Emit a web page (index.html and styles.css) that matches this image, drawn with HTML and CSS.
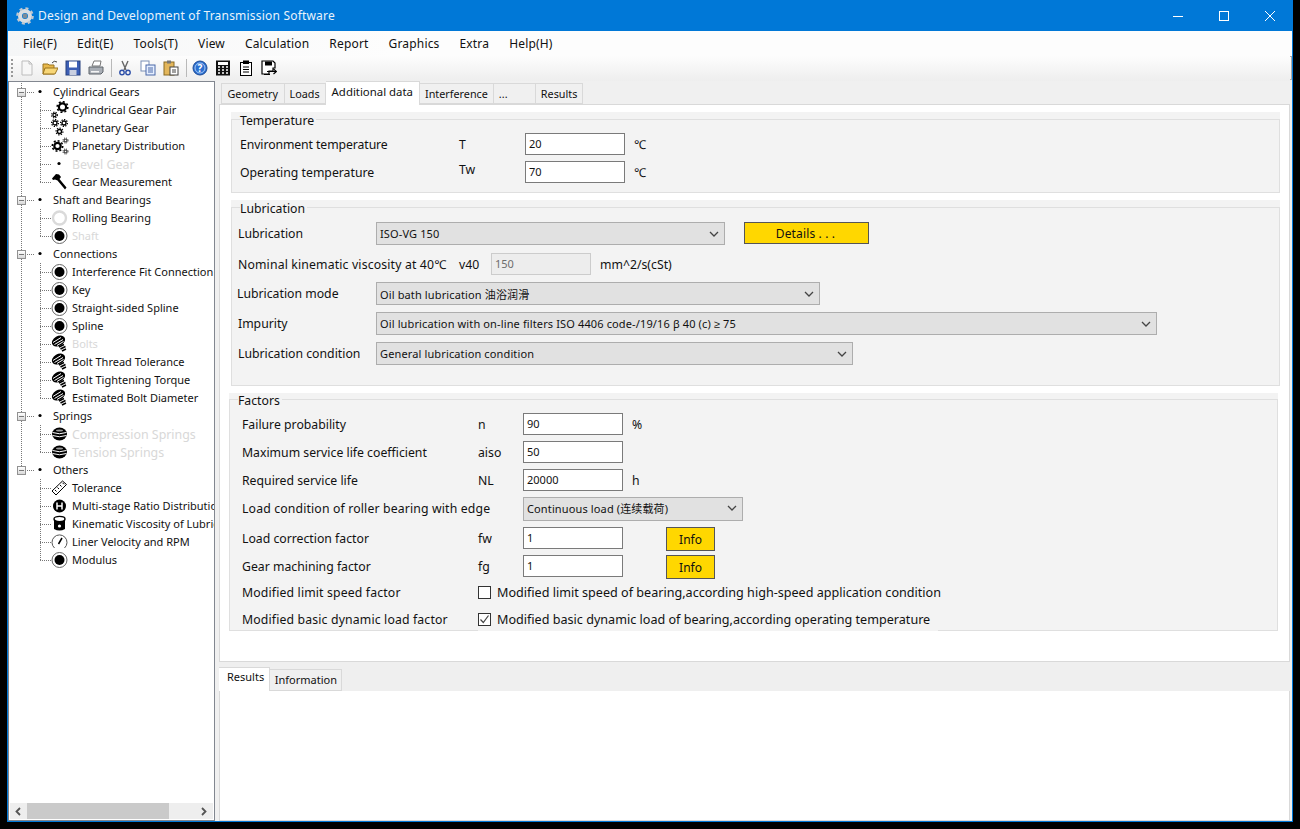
FILE: index.html
```html
<!DOCTYPE html>
<html lang="en">
<head>
    <meta charset="UTF-8">
    <title>Design and Development of Transmission Software</title>
    <link rel="stylesheet" href="styles.css">
</head>
<body>
    <svg class="sprite" xmlns="http://www.w3.org/2000/svg">
        <symbol id="i-gear-pair" viewBox="0 0 18 18">
            <circle cx="11.5" cy="6" r="3.6" fill="none" stroke="#000" stroke-width="2.2"/>
            <circle cx="11.5" cy="6" r="5.3" fill="none" stroke="#000" stroke-width="1.6" stroke-dasharray="2 2.1"/>
            <circle cx="3.5" cy="14" r="1.6" fill="none" stroke="#000" stroke-width="1.2"/>
            <circle cx="3.5" cy="14" r="2.9" fill="none" stroke="#000" stroke-width="1.1" stroke-dasharray="1.2 1.2"/>
        </symbol>
        <symbol id="i-planet" viewBox="0 0 18 18">
            <g fill="none" stroke="#000" stroke-width="1.3">
                <circle cx="4" cy="4" r="2"/><circle cx="4" cy="4" r="3.4" stroke-dasharray="1.3 1.3"/>
                <circle cx="13" cy="4" r="2"/><circle cx="13" cy="4" r="3.4" stroke-dasharray="1.3 1.3"/>
                <circle cx="8.5" cy="12.5" r="2"/><circle cx="8.5" cy="12.5" r="3.4" stroke-dasharray="1.3 1.3"/>
            </g>
        </symbol>
        <symbol id="i-distrib" viewBox="0 0 18 18">
            <g fill="none" stroke="#000">
                <circle cx="6.5" cy="9" r="3.2" stroke-width="2.2"/><circle cx="6.5" cy="9" r="5.2" stroke-width="1.6" stroke-dasharray="2 2"/>
                <circle cx="14.5" cy="3.5" r="1.3"/><circle cx="14.5" cy="3.5" r="2.5" stroke-dasharray="1 1"/>
                <circle cx="14.5" cy="14.5" r="1.3"/><circle cx="14.5" cy="14.5" r="2.5" stroke-dasharray="1 1"/>
            </g>
        </symbol>
        <symbol id="i-dot" viewBox="0 0 18 18"><circle cx="8" cy="8.5" r="1.6" fill="#000"/></symbol>
        <symbol id="i-hammer" viewBox="0 0 18 18">
            <path d="M1 5.5 L5 1 L8 1.5 L10 4 L8.5 6 L15.5 14.5 L14 16.5 L6.5 7.5 L4 6.5 L2 7 Z" fill="#000"/>
        </symbol>
        <symbol id="i-ring" viewBox="0 0 18 18"><circle cx="8.5" cy="9" r="6.5" fill="none" stroke="#dadada" stroke-width="2.4"/></symbol>
        <symbol id="i-disc" viewBox="0 0 18 18">
            <circle cx="8.5" cy="9" r="7.5" fill="#fff" stroke="#666"/>
            <circle cx="8.5" cy="9" r="5" fill="#000"/>
        </symbol>
        <symbol id="i-bolt" viewBox="0 0 18 18">
            <ellipse cx="7.5" cy="6" rx="7" ry="5" transform="rotate(-30 7.5 6)" fill="#000"/>
            <path d="M2 7.5 L10 2.5 M3.5 9.5 L12 4.5 M6 10.5 L12.5 6.5" stroke="#fff" stroke-width="1"/>
            <path d="M8 12 L13 9.5 M9.5 14 L14.5 11.5 M11 16 L15 14" stroke="#000" stroke-width="1.5"/>
        </symbol>
        <symbol id="i-spring" viewBox="0 0 18 18">
            <ellipse cx="8.5" cy="9" rx="7.5" ry="6.5" fill="#000"/>
            <path d="M1.5 7.5 Q8.5 10 15.5 7.5 M1.5 10.5 Q8.5 13 15.5 10.5" fill="none" stroke="#fff"/>
            <ellipse cx="8.5" cy="5.5" rx="3.5" ry="1" fill="#999"/>
        </symbol>
        <symbol id="i-ruler" viewBox="0 0 18 18">
            <path d="M1 12 L11.5 2 L15.5 5.5 L5 16 Z" fill="#fff" stroke="#000"/>
            <path d="M4 11 L5.5 12.5 M6.5 8.5 L8 10 M9 6 L10.5 7.5 M11.5 3.8 L13 5.3" stroke="#000"/>
        </symbol>
        <symbol id="i-multi" viewBox="0 0 18 18">
            <circle cx="8.5" cy="9" r="6.5" fill="#000"/>
            <path d="M6 5.5 V12.5 M11 5.5 V12.5 M6 9 H11" stroke="#fff" stroke-width="1.5"/>
        </symbol>
        <symbol id="i-visc" viewBox="0 0 18 18">
            <path d="M3 4 H14 V14 Q8.5 17 3 14 Z" fill="#000"/>
            <ellipse cx="8.5" cy="4" rx="5.5" ry="2.6" fill="#fff" stroke="#000" stroke-width="1.4"/>
            <circle cx="8.5" cy="11" r="1.6" fill="#fff"/>
        </symbol>
        <symbol id="i-gauge" viewBox="0 0 18 18">
            <path d="M3.5 15 A7.5 7.5 0 1 1 13.5 15" fill="none" stroke="#555"/>
            <path d="M7.5 11 L11 5" stroke="#000" stroke-width="1.5"/>
        </symbol>
        <symbol id="i-chevron" viewBox="0 0 10 6"><path d="M1 1 L5 5 L9 1" fill="none" stroke="#444" stroke-width="1.3"/></symbol>
    </svg>

    <div class="window">
        <div class="titlebar">
            <svg class="app-icon" width="18" height="18" viewBox="0 0 18 18">
                <circle cx="9" cy="9" r="5" fill="none" stroke="#d9dde2" stroke-width="4"/>
                <circle cx="9" cy="9" r="7.6" fill="none" stroke="#c2c8cf" stroke-width="2.4" stroke-dasharray="3 3"/>
                <circle cx="9" cy="9" r="2.4" fill="#7e8c99"/>
            </svg>
            <span class="title-text">Design and Development of Transmission Software</span>
            <div class="win-buttons">
                <svg width="12" height="12" viewBox="0 0 12 12"><path d="M1 6.5 H11" stroke="#fff"/></svg>
                <svg width="12" height="12" viewBox="0 0 12 12"><rect x="1.5" y="1.5" width="9" height="9" fill="none" stroke="#fff"/></svg>
                <svg width="12" height="12" viewBox="0 0 12 12"><path d="M1 1 L11 11 M11 1 L1 11" stroke="#fff"/></svg>
            </div>
        </div>

        <div class="menubar">
            <span>File(F)</span>
            <span>Edit(E)</span>
            <span>Tools(T)</span>
            <span>View</span>
            <span>Calculation</span>
            <span>Report</span>
            <span>Graphics</span>
            <span>Extra</span>
            <span>Help(H)</span>
        </div>

        <div class="toolbar">
            <span class="grip"></span>
            <svg class="tool" viewBox="0 0 16 16"><path d="M3 1 H10 L13 4 V15 H3 Z" fill="#f7f7f7" stroke="#bdbdbd"/><path d="M10 1 V4 H13" fill="none" stroke="#bdbdbd"/></svg>
            <svg class="tool" viewBox="0 0 16 16"><path d="M1 4 H6 L7 5 H12 V14 H1 Z" fill="#e8b84a" stroke="#9a7420"/><path d="M3 8 H16 L13 14 H1 Z" fill="#f7d677" stroke="#9a7420"/><path d="M10 3 Q12 0 15 2" fill="none" stroke="#444"/></svg>
            <svg class="tool" viewBox="0 0 16 16"><rect x="1" y="1" width="14" height="14" fill="#3d5fb5" stroke="#27407f"/><rect x="4" y="1.5" width="8" height="6" fill="#fff"/><rect x="4.5" y="10" width="7" height="5" fill="#c9cfe0"/></svg>
            <svg class="tool" viewBox="0 0 16 16"><path d="M4 6 L6 1 H13 L12 6 Z" fill="#fff" stroke="#777"/><path d="M1 7 H15 V12 L13 14 H1 Z" fill="#a9aeb5" stroke="#5f646b"/><rect x="3" y="11" width="8" height="1.5" fill="#f4f4f4"/></svg>
            <span class="tool-sep"></span>
            <svg class="tool" viewBox="0 0 16 16"><path d="M5 1 L9 10 M11 1 L7 10" stroke="#666" stroke-width="1.4"/><circle cx="5" cy="12.5" r="2.2" fill="none" stroke="#2d4fa8" stroke-width="1.4"/><circle cx="11" cy="12.5" r="2.2" fill="none" stroke="#2d4fa8" stroke-width="1.4"/></svg>
            <svg class="tool" viewBox="0 0 16 16"><rect x="1" y="1" width="8" height="10" fill="#fff" stroke="#7b8fb5"/><rect x="6" y="5" width="9" height="10" fill="#e6efff" stroke="#4b68a8"/><path d="M8 8 H13 M8 10 H13 M8 12 H13" stroke="#4b68a8"/></svg>
            <svg class="tool" viewBox="0 0 16 16"><rect x="1" y="2" width="10" height="13" fill="#e3b65b" stroke="#8a6a22"/><rect x="4" y="0.5" width="4" height="3" fill="#777"/><rect x="7" y="7" width="8" height="8" fill="#fff" stroke="#444"/><path d="M9 10 H13 M9 12 H13" stroke="#444"/></svg>
            <span class="tool-sep"></span>
            <svg class="tool" viewBox="0 0 16 16"><circle cx="8" cy="8" r="7" fill="#2b6fd0" stroke="#1c4b97"/><circle cx="8" cy="8" r="5" fill="none" stroke="#a9c9f5"/><text x="8" y="11.5" class="help-mark">?</text></svg>
            <svg class="tool" viewBox="0 0 16 16"><rect x="1" y="0.5" width="14" height="15" fill="#111"/><rect x="3" y="2" width="10" height="3" fill="#fff"/><path d="M3 7 H5 M7 7 H9 M11 7 H13 M3 10 H5 M7 10 H9 M11 10 H13 M3 13 H5 M7 13 H9 M11 13 H13" stroke="#fff" stroke-width="1.6"/></svg>
            <svg class="tool" viewBox="0 0 16 16"><rect x="2.5" y="2.5" width="11" height="13" fill="#fff" stroke="#000"/><rect x="5" y="0.5" width="6" height="3.5" fill="#000"/><path d="M5 7 H11 M5 9.5 H11 M5 12 H11" stroke="#000"/></svg>
            <svg class="tool" viewBox="0 0 16 16"><path d="M1 1 H12 L14 3 V8 H12 V11 H8 V14 H1 Z" fill="#fff" stroke="#000" stroke-width="1.2"/><rect x="4" y="1.5" width="7" height="4" fill="#000"/><path d="M3 14.5 H9 M6 11.5 H15 M12.5 9 L15.5 11.5 L12.5 14" fill="none" stroke="#000" stroke-width="1.2"/></svg>
            <span class="toolbar-end"></span>
        </div>

        <div class="workspace">
            <div class="tree">
                <div class="tree-body">
                    <div class="node root"><span class="exp"></span><svg class="ico"><use href="#i-dot"/></svg><span>Cylindrical Gears</span></div>
                    <div class="node child"><svg class="ico"><use href="#i-gear-pair"/></svg><span>Cylindrical Gear Pair</span></div>
                    <div class="node child"><svg class="ico"><use href="#i-planet"/></svg><span>Planetary Gear</span></div>
                    <div class="node child"><svg class="ico"><use href="#i-distrib"/></svg><span>Planetary Distribution</span></div>
                    <div class="node child off wider"><svg class="ico"><use href="#i-dot"/></svg><span>Bevel Gear</span></div>
                    <div class="node child last"><svg class="ico"><use href="#i-hammer"/></svg><span>Gear Measurement</span></div>
                    <div class="node root"><span class="exp"></span><svg class="ico"><use href="#i-dot"/></svg><span>Shaft and Bearings</span></div>
                    <div class="node child"><svg class="ico"><use href="#i-ring"/></svg><span>Rolling Bearing</span></div>
                    <div class="node child last off"><svg class="ico"><use href="#i-disc"/></svg><span>Shaft</span></div>
                    <div class="node root"><span class="exp"></span><svg class="ico"><use href="#i-dot"/></svg><span>Connections</span></div>
                    <div class="node child"><svg class="ico"><use href="#i-disc"/></svg><span>Interference Fit Connection</span></div>
                    <div class="node child"><svg class="ico"><use href="#i-disc"/></svg><span>Key</span></div>
                    <div class="node child"><svg class="ico"><use href="#i-disc"/></svg><span>Straight-sided Spline</span></div>
                    <div class="node child"><svg class="ico"><use href="#i-disc"/></svg><span>Spline</span></div>
                    <div class="node child off"><svg class="ico"><use href="#i-bolt"/></svg><span>Bolts</span></div>
                    <div class="node child"><svg class="ico"><use href="#i-bolt"/></svg><span>Bolt Thread Tolerance</span></div>
                    <div class="node child"><svg class="ico"><use href="#i-bolt"/></svg><span>Bolt Tightening Torque</span></div>
                    <div class="node child last"><svg class="ico"><use href="#i-bolt"/></svg><span>Estimated Bolt Diameter</span></div>
                    <div class="node root"><span class="exp"></span><svg class="ico"><use href="#i-dot"/></svg><span>Springs</span></div>
                    <div class="node child off wider"><svg class="ico"><use href="#i-spring"/></svg><span>Compression Springs</span></div>
                    <div class="node child last off wider"><svg class="ico"><use href="#i-spring"/></svg><span>Tension Springs</span></div>
                    <div class="node root final"><span class="exp"></span><svg class="ico"><use href="#i-dot"/></svg><span>Others</span></div>
                    <div class="node child nolevel"><svg class="ico"><use href="#i-ruler"/></svg><span>Tolerance</span></div>
                    <div class="node child nolevel"><svg class="ico"><use href="#i-multi"/></svg><span>Multi-stage Ratio Distribution</span></div>
                    <div class="node child nolevel"><svg class="ico"><use href="#i-visc"/></svg><span>Kinematic Viscosity of Lubricant</span></div>
                    <div class="node child nolevel"><svg class="ico"><use href="#i-gauge"/></svg><span>Liner Velocity and RPM</span></div>
                    <div class="node child nolevel last"><svg class="ico"><use href="#i-disc"/></svg><span>Modulus</span></div>
                </div>
                <div class="hscroll">
                    <svg width="9" height="9" viewBox="0 0 9 9"><path d="M6 1 L2.5 4.5 L6 8" fill="none" stroke="#555" stroke-width="1.8"/></svg>
                    <span class="thumb"></span>
                    <svg width="9" height="9" viewBox="0 0 9 9"><path d="M3 1 L6.5 4.5 L3 8" fill="none" stroke="#555" stroke-width="1.8"/></svg>
                </div>
            </div>

            <div class="main">
                <div class="tabs">
                    <span class="tab">Geometry</span>
                    <span class="tab">Loads</span>
                    <span class="tab active">Additional data</span>
                    <span class="tab">Interference</span>
                    <span class="tab tab-more">...</span>
                    <span class="tab">Results</span>
                </div>

                <div class="pane">
                    <section class="group group-temp">
                        <div class="frame">
                            <div class="group-title">Temperature</div>
                            <div class="row">
                                <span class="label tight">Environment temperature</span>
                                <span class="sym">T</span>
                                <input class="num" type="text" value="20">
                                <span class="unit">℃</span>
                            </div>
                            <div class="row">
                                <span class="label">Operating temperature</span>
                                <span class="sym sym-up">Tw</span>
                                <input class="num" type="text" value="70">
                                <span class="unit">℃</span>
                            </div>
                        </div>
                    </section>

                    <section class="group group-lube">
                        <div class="frame">
                            <div class="group-title">Lubrication</div>
                            <div class="row combo-row">
                                <span class="label">Lubrication</span>
                                <div class="combo w-349"><span>ISO-VG 150</span><svg class="chev"><use href="#i-chevron"/></svg></div>
                                <button class="yellow-btn details-btn">Details . . .</button>
                            </div>
                            <div class="row visc-row">
                                <span class="label wide loose">Nominal kinematic viscosity at 40℃</span>
                                <span class="sym">v40</span>
                                <input class="num" type="text" value="150" disabled>
                                <span class="unit">mm^2/s(cSt)</span>
                            </div>
                            <div class="row combo-row">
                                <span class="label nudge">Lubrication mode</span>
                                <div class="combo w-444"><span>Oil bath lubrication 油浴润滑</span><svg class="chev"><use href="#i-chevron"/></svg></div>
                            </div>
                            <div class="row combo-row">
                                <span class="label">Impurity</span>
                                <div class="combo w-781"><span>Oil lubrication with on-line filters ISO 4406 code-/19/16 β 40 (c) ≥ 75</span><svg class="chev"><use href="#i-chevron"/></svg></div>
                            </div>
                            <div class="row combo-row">
                                <span class="label">Lubrication condition</span>
                                <div class="combo w-477"><span>General lubrication condition</span><svg class="chev"><use href="#i-chevron"/></svg></div>
                            </div>
                        </div>
                    </section>

                    <section class="group group-factors">
                        <div class="frame">
                            <div class="group-title">Factors</div>
                            <div class="row">
                                <span class="label">Failure probability</span>
                                <span class="sym">n</span>
                                <input class="num" type="text" value="90">
                                <span class="unit">%</span>
                            </div>
                            <div class="row">
                                <span class="label">Maximum service life coefficient</span>
                                <span class="sym">aiso</span>
                                <input class="num" type="text" value="50">
                            </div>
                            <div class="row">
                                <span class="label">Required service life</span>
                                <span class="sym">NL</span>
                                <input class="num" type="text" value="20000">
                                <span class="unit">h</span>
                            </div>
                            <div class="row tall">
                                <span class="label label-long loose">Load condition of roller bearing with edge</span>
                                <div class="combo w-220"><span>Continuous load (连续载荷)</span><svg class="chev"><use href="#i-chevron"/></svg></div>
                            </div>
                            <div class="row">
                                <span class="label">Load correction factor</span>
                                <span class="sym">fw</span>
                                <input class="num" type="text" value="1">
                                <button class="yellow-btn info-btn">Info</button>
                            </div>
                            <div class="row">
                                <span class="label">Gear machining factor</span>
                                <span class="sym">fg</span>
                                <input class="num" type="text" value="1">
                                <button class="yellow-btn info-btn">Info</button>
                            </div>
                            <div class="row check-row">
                                <span class="label loose">Modified limit speed factor</span>
                                <span class="check"></span>
                                <span class="check-text">Modified limit speed of bearing,according high-speed application condition</span>
                            </div>
                            <div class="row check-row last-check">
                                <span class="label loose">Modified basic dynamic load factor</span>
                                <div class="check-wrap">
                                    <span class="check"><svg width="11" height="11" viewBox="0 0 11 11"><path d="M1.5 5.5 L4.3 8.5 L9.5 1.5" fill="none" stroke="#444" stroke-width="1.2"/></svg></span>
                                    <span class="check-text">Modified basic dynamic load of bearing,according operating temperature</span>
                                </div>
                            </div>
                        </div>
                    </section>
                </div>

                <div class="tabs tabs-bottom">
                    <span class="tab active">Results</span>
                    <span class="tab">Information</span>
                </div>
                <div class="output"></div>
            </div>
        </div>
    </div>
</body>
</html>
```

FILE: styles.css
```css
* {
    box-sizing: border-box;
}

html, body {
    margin: 0;
    height: 829px;
    overflow: hidden;
    background: #000;
}

body {
    font-family: "Noto Sans", "Liberation Sans", "Noto Sans CJK SC", sans-serif;
    font-size: 11px;
    color: #111;
}

.sprite {
    display: none;
}

.window {
    width: 1286px;
    height: 822px;
    margin-left: 7px;
    border: 1px solid #0078d7;
    border-top: none;
    display: flex;
    flex-direction: column;
    background: #f0f0f0;
}

/* title bar */
.titlebar {
    height: 31px;
    flex: none;
    background: #0078d7;
    color: #e8f2fb;
    display: flex;
    align-items: center;
    padding-left: 8px;
    font-size: 12px;
}

.app-icon {
    margin-right: 4px;
}

.title-text {
    flex: 1;
    letter-spacing: 0.2px;
}

.win-buttons {
    display: flex;
    gap: 34px;
    padding-right: 16px;
}

/* menu and toolbar */
.menubar {
    height: 25px;
    flex: none;
    display: flex;
    align-items: center;
    gap: 20px;
    padding-left: 15px;
    font-size: 12px;
    letter-spacing: 0.17px;
    background: linear-gradient(to right, #f5f6f7, #fdfdfd 30%);
}

.toolbar {
    height: 25px;
    flex: none;
    display: flex;
    align-items: center;
    padding: 0 0 1px 3px;
    background: linear-gradient(to bottom, #fdfdfd, #eeeeee);
}

.grip {
    width: 2px;
    height: 18px;
    margin-right: 2px;
    background: repeating-linear-gradient(to bottom, #999 0 2px, transparent 2px 4px);
}

.tool {
    width: 16px;
    height: 16px;
    margin: 0 3.5px;
}

.tool-sep {
    width: 1px;
    height: 18px;
    margin: 0 1px 0 4px;
    background: #b9b9b9;
}

.help-mark {
    font-size: 10px;
    font-weight: 700;
    fill: #fff;
    text-anchor: middle;
}

.toolbar-end {
    margin-left: auto;
    width: 2px;
    height: 24px;
    border: 1px solid #aaa;
    border-left: none;
}

/* left tree */
.workspace {
    flex: 1;
    display: flex;
    min-height: 0;
}

.tree {
    width: 207px;
    flex: none;
    background: #fff;
    border: 1px solid #828790;
    display: flex;
    flex-direction: column;
}

.tree-body {
    flex: 1;
    padding-top: 1px;
    overflow: hidden;
}

.node {
    height: 18px;
    display: flex;
    align-items: center;
    white-space: nowrap;
    background-repeat: no-repeat;
}

.node span:last-child {
    position: relative;
    top: -1px;
}

.root {
    padding-left: 8px;
    background-image:
        repeating-linear-gradient(to bottom, #777 0 1px, transparent 1px 2px),
        repeating-linear-gradient(to right, #777 0 1px, transparent 1px 2px);
    background-size: 1px 100%, 8px 1px;
    background-position: 12px 0, 18px 9px;
}

.root.final {
    background-size: 1px 9px, 8px 1px;
}

.child {
    padding-left: 42px;
    background-image:
        repeating-linear-gradient(to bottom, #777 0 1px, transparent 1px 2px),
        repeating-linear-gradient(to bottom, #777 0 1px, transparent 1px 2px),
        repeating-linear-gradient(to right, #777 0 1px, transparent 1px 2px);
    background-size: 1px 100%, 1px 100%, 12px 1px;
    background-position: 12px 0, 31px 0, 31px 9px;
}

.child.last {
    background-size: 1px 100%, 1px 10px, 12px 1px;
}

.child.nolevel {
    background-image:
        repeating-linear-gradient(to bottom, #777 0 1px, transparent 1px 2px),
        repeating-linear-gradient(to right, #777 0 1px, transparent 1px 2px);
    background-size: 1px 100%, 12px 1px;
    background-position: 31px 0, 31px 9px;
}

.child.nolevel.last {
    background-size: 1px 10px, 12px 1px;
}

.exp {
    width: 9px;
    height: 9px;
    border: 1px solid #919191;
    background: linear-gradient(#777, #777) center / 5px 1px no-repeat, linear-gradient(#fff, #d8d8d8);
    margin-right: 13px;
}

.ico {
    width: 18px;
    height: 18px;
    flex: none;
    margin-right: 3px;
}

.root .ico {
    margin-left: -7px;
    margin-right: 3px;
}

.off span {
    color: #d8d8d8;
}

.node.wider span:last-child {
    font-size: 12.4px;
    top: 0;
}

.hscroll {
    height: 16px;
    margin: 0 1px 1px;
    flex: none;
    background: #eeeeee;
    display: flex;
    align-items: center;
    padding: 0 5px 0 4px;
}

.thumb {
    width: 142px;
    height: 16px;
    margin: 0 auto 0 4px;
    background: #cacaca;
}

/* right side */
.main {
    flex: 1;
    min-width: 0;
    margin-left: 4px;
    margin-right: 2px;
    display: flex;
    flex-direction: column;
}

.tabs {
    height: 24px;
    flex: none;
    display: flex;
    align-items: flex-end;
    padding-left: 2px;
    position: relative;
    z-index: 1;
    margin-bottom: -1px;
}

.tab {
    height: 21px;
    line-height: 20px;
    padding: 0 5px;
    border: 1px solid #d9d9d9;
    border-left-width: 0;
    background: #f0f0f0;
    margin-bottom: 1px;
    font-size: 10.8px;
}

.tab:first-child {
    border-left-width: 1px;
    padding: 0 5.5px;
}

.tab.active {
    height: 24px;
    line-height: 20px;
    padding: 0 6px;
    margin-bottom: 0;
    background: #fff;
    border-bottom: none;
    font-size: 11.4px;
}

.tab-more {
    width: 42px;
}

.pane {
    height: 558px;
    flex: none;
    background: #fff;
    border: 1px solid #d9d9d9;
    padding: 7px 9px 0 11px;
    font-size: 12.25px;
}

.group {
    background: #f3f3f3;
    padding-top: 7px;
    margin-bottom: 7px;
}

.frame {
    height: 100%;
    border: 1px solid #dfdfdf;
    padding: 0 0 0 8px;
}

.group-title {
    width: fit-content;
    height: 14px;
    line-height: 16px;
    margin-top: -7px;
    padding: 0 2px 0 0;
    background: #f3f3f3;
}

.group-temp {
    height: 81px;
}

.group-temp .group-title {
    margin-bottom: 6px;
}

.group-lube {
    height: 186px;
}

.group-lube .frame {
    padding-left: 6px;
}

.group-lube .group-title {
    margin-left: 2px;
    margin-bottom: 7px;
}

.group-factors {
    height: 238px;
    margin-left: -2px;
    margin-right: 2px;
    padding-top: 6px;
}

.group-factors .frame {
    padding-left: 12px;
}

.group-factors .group-title {
    margin-left: -4px;
    margin-bottom: 6px;
}

.row {
    height: 22px;
    display: flex;
    align-items: center;
    margin-bottom: 6px;
    white-space: nowrap;
}

.label {
    width: 219px;
    flex: none;
}

.loose {
    letter-spacing: 0.15px;
}

.tight {
    letter-spacing: -0.09px;
}

.sym {
    width: 66px;
    flex: none;
}

.sym-up {
    padding-bottom: 5px;
}

.unit {
    margin-left: 9px;
}

.num {
    width: 100px;
    height: 22px;
    flex: none;
    border: 1px solid #7a7a7a;
    background: #fff;
    padding: 0 3px 2px;
    font: 11px "Noto Sans", sans-serif;
    color: #111;
}

.num:disabled {
    border-color: #cccccc;
    background: #ededed;
    color: #6d6d6d;
}

.combo {
    height: 23px;
    flex: none;
    display: flex;
    align-items: center;
    justify-content: space-between;
    padding: 0 5px 0 3px;
    background: #e1e1e1;
    border: 1px solid #adadad;
    font-size: 11px;
    letter-spacing: 0.13px;
}

.chev {
    width: 10px;
    height: 6px;
}

.w-349 { width: 349px; }
.w-444 { width: 444px; }
.w-781 { width: 781px; }
.w-477 { width: 477px; }
.w-220 { width: 220px; }

.yellow-btn {
    background: #ffd700;
    border: 1px solid #555;
    color: #111;
    font: 12px "Noto Sans", sans-serif;
    padding: 0;
}

.details-btn {
    width: 125px;
    height: 22px;
    margin-left: 19px;
    align-self: flex-start;
    letter-spacing: 0.15px;
    padding: 1px 2px 0 0;
}

.info-btn {
    width: 49px;
    height: 24px;
    margin-left: 43px;
    flex: none;
    align-self: flex-start;
}

/* lubrication rows */
.group-lube .label {
    width: 138px;
}

.group-lube .label.wide {
    width: 221px;
}

.group-lube .sym {
    width: 32px;
}

.group-lube .label.nudge {
    margin-left: -1px;
    margin-right: 1px;
}

.combo-row {
    height: 23px;
    margin-bottom: 7px;
}

.visc-row {
    margin-top: 8px;
    margin-bottom: 7px;
}

/* factor rows */
.group-factors .label {
    width: 236px;
}

.group-factors .label-long {
    width: 281px;
    padding-bottom: 2px;
}

.group-factors .sym {
    width: 45px;
}

.tall {
    height: 24px;
}

.tall .combo {
    height: 24px;
    padding-bottom: 2px;
}

.check-row {
    margin-top: -2px;
    margin-bottom: 7px;
}

.last-check {
    margin-top: -2px;
    margin-bottom: 0;
    align-items: flex-start;
}

.last-check .label {
    line-height: 24px;
}

.check {
    width: 13px;
    height: 13px;
    flex: none;
    border: 1px solid #333;
    background: #fff;
    display: flex;
    align-items: center;
    justify-content: center;
}

.check-text {
    margin-left: 6px;
    font-size: 12.6px;
}

.check-wrap {
    display: flex;
    align-items: center;
    height: 23px;
    padding-right: 8px;
    background: #f3f3f3;
}

.tabs-bottom {
    height: 29px;
    padding-left: 0;
    background: #efefef;
    margin-bottom: -1px;
}

.tabs-bottom .tab.active {
    height: 24px;
    line-height: 18px;
    padding: 0 5px 0 8px;
    border-left: none;
    font-size: 11px;
}

.tabs-bottom .tab {
    height: 22px;
    padding: 0 4.5px;
    margin-bottom: 0;
    font-size: 11px;
}

.output {
    flex: 1;
    background: #fff;
    border: 1px solid #d9d9d9;
}
```
